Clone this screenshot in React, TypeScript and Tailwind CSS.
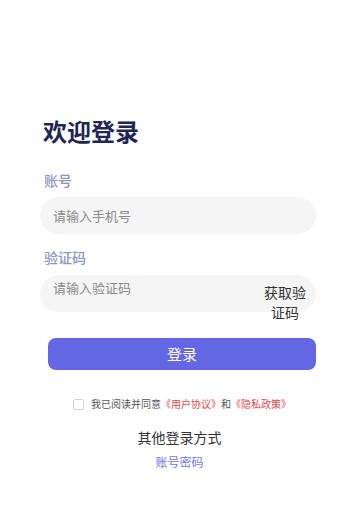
import React, { useState } from "react";

export default function App() {
  const [phone, setPhone] = useState("");
  const [code, setCode] = useState("");
  const [agreed, setAgreed] = useState(false);

  return (
    <div
      className="min-h-screen bg-white"
      style={{ fontFamily: '"Noto Sans CJK SC", "Noto Sans", sans-serif' }}
    >
      <div className="pt-[114px] pl-[40px] pr-[43px]">
        <h1 className="pl-[3px] text-[24px] leading-[34px] font-bold text-[#1e2756]">欢迎登录</h1>

        <div className="mt-[22px] pl-[4px] text-[14px] leading-5 font-medium text-[#8d95c6]">账号</div>
        <div className="mt-[7px] h-[37px] rounded-full bg-[#f5f5f5] flex items-center px-[13px]">
          <input
            value={phone}
            onChange={(e) => setPhone(e.target.value)}
            placeholder="请输入手机号"
            className="w-full bg-transparent outline-none text-[13px] text-[#333] placeholder:text-[#8a8a8a]"
          />
        </div>

        <div className="mt-[13px] pl-[4px] text-[14px] leading-5 font-medium text-[#8d95c6]">验证码</div>
        <div className="mt-[8px] h-[37px] rounded-full bg-[#f5f5f5] flex items-start pl-[13px] pr-[7px]">
          <input
            value={code}
            onChange={(e) => setCode(e.target.value)}
            placeholder="请输入验证码"
            className="flex-1 min-w-0 h-6 bg-transparent outline-none text-[13px] text-[#333] placeholder:text-[#8a8a8a]"
          />
          <button className="w-12 pt-[7px] text-[14px] leading-5 text-center text-[#333]">获取验证码</button>
        </div>

        <button className="mt-[26px] ml-[8px] w-[268px] h-[32px] rounded-lg bg-[#6467e3] text-white text-[15px]">
          登录
        </button>

        <div className="mt-[26px] flex items-center pl-[33px]">
          <button
            onClick={() => setAgreed(!agreed)}
            className={`w-[11px] h-[11px] border border-[#d6d6d6] rounded-[2px] ${agreed ? "bg-[#6467e3]" : "bg-white"}`}
          />
          <p className="ml-[7px] text-[10px] leading-4 text-[#555]">
            我已阅读并同意<span className="text-[#e0484d]">《用户协议》</span>和
            <span className="text-[#e0484d]">《隐私政策》</span>
          </p>
        </div>

        <div className="mt-[15px] text-center text-[14px] leading-5 text-[#333] pl-[3px]">其他登录方式</div>
        <div className="mt-[5px] text-center text-[12px] leading-5 text-[#6b78ee] pl-[3px]">账号密码</div>
      </div>
    </div>
  );
}
